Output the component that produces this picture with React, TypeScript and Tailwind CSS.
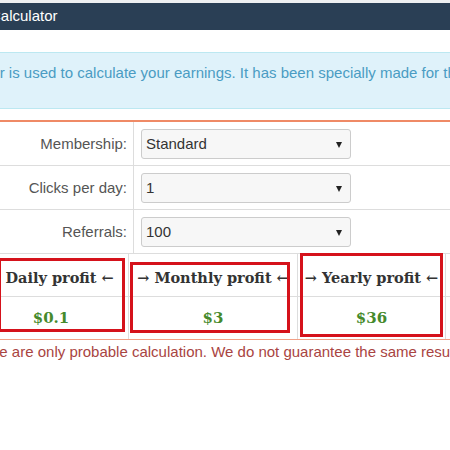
import React from "react";

function SelectBox({ value }: { value: string }) {
  return (
    <div className="relative flex h-[30px] w-[210px] items-center rounded-[3px] border border-[#cccccc] bg-[#f7f7f7] pl-[4px] text-[15px] text-[#333333]">
      <span>{value}</span>
      <svg className="absolute right-[8px] top-[12px]" width="6" height="6" viewBox="0 0 6 6">
        <polygon points="0,0 6,0 3,6" fill="#222222" />
      </svg>
    </div>
  );
}

function FormRow({ label, value }: { label: string; value: string }) {
  return (
    <div className="flex h-[44px] border-b border-[#dddddd]">
      <div className="flex w-[134px] shrink-0 items-center justify-end border-r border-[#dddddd] pr-[6px] pt-[2px] text-[15px] text-[#555555]">
        {label}
      </div>
      <div className="pl-[7px] pt-[7px]">
        <SelectBox value={value} />
      </div>
    </div>
  );
}

function ProfitCol({ title, value, w }: { title: string; value: string; w: string }) {
  return (
    <div className={`${w} shrink-0 border-r border-[#dddddd]`}>
      <div className="flex h-[43px] items-center justify-center whitespace-nowrap border-b border-[#dddddd] pt-[5px] font-['DejaVu_Serif',serif] text-[14.5px] font-bold text-[#333333]">
        {title}
      </div>
      <div className="flex h-[42px] items-center justify-center font-['DejaVu_Serif',serif] text-[15px] font-bold text-[#468a2c]">
        {value}
      </div>
    </div>
  );
}

export default function App() {
  return (
    <div className="relative h-[450px] w-[450px] overflow-hidden bg-white font-['Liberation_Sans',Arial,sans-serif]">
      <div className="h-[3px] bg-[#eef0f2]" />
      <div className="flex h-[27px] items-center overflow-hidden bg-[#2a3f55]">
        <span className="ml-[-10px] whitespace-nowrap text-[15px] text-white">Calculator</span>
      </div>

      <div className="mt-[22px] h-[57px] overflow-hidden border-y border-[#bce8f1] bg-[#dff2fa]">
        <div className="ml-[-92px] whitespace-nowrap pt-[10px] text-[15px] leading-[20px] text-[#4a9cc3]">
          This calculator is used to calculate your earnings. It has been specially made for those who want to know
        </div>
      </div>

      <div className="mt-[11px] border-t-2 border-[#ef8a66]">
        <FormRow label="Membership:" value="Standard" />
        <FormRow label="Clicks per day:" value="1" />
        <FormRow label="Referrals:" value="100" />
        <div className="flex ml-[-26px] border-b border-[#f2a086]">
          <ProfitCol w="w-[155px]" title="→ Daily profit ←" value="$0.1" />
          <ProfitCol w="w-[169px]" title="→ Monthly profit ←" value="$3" />
          <ProfitCol w="w-[148px]" title="→ Yearly profit ←" value="$36" />
          <div className="flex-1">
            <div className="h-[43px] border-b border-[#dddddd]" />
          </div>
        </div>
      </div>

      <div className="ml-[-34px] whitespace-nowrap pt-[1px] text-[15px] leading-[22px] text-[#a94442]">
        These are only probable calculation. We do not guarantee the same results.
      </div>

      <div className="absolute left-[-2px] top-[258px] h-[74px] w-[127px] border-[3px] border-[#d5121b]" />
      <div className="absolute left-[130px] top-[262px] h-[71px] w-[160px] border-[3px] border-[#d5121b]" />
      <div className="absolute left-[300px] top-[253px] h-[84px] w-[143px] border-[3px] border-[#d5121b]" />
    </div>
  );
}
